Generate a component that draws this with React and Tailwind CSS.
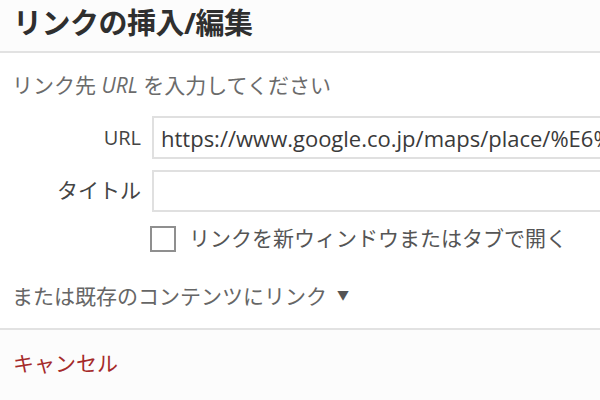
export default function App() {
  const jp = 'font-["Open_Sans","Noto_Sans_CJK_JP",sans-serif]';
  return (
    <div className={`w-[600px] h-[400px] overflow-hidden bg-white ${jp}`}>
      <div className="flex h-[53px] items-center border-b-2 border-[#e2e2e2] bg-[#fcfcfc] pb-[6px] pl-[13px]">
        <h1 className="text-[29px] font-bold leading-none tracking-[-0.5px] text-[#2f2f2f]">リンクの挿入/編集</h1>
      </div>

      <div className="px-[12px] pt-[20px]">
        <p className="text-[21px] leading-6 text-[#6b6b6b]">
          リンク先 <em>URL</em> を入力してください
        </p>

        <div className="mt-[19px] flex flex-col gap-[11px]">
          <div className="flex items-center gap-[11px]">
            <label className="w-[129px] shrink-0 text-right text-[20px] text-[#444]">URL</label>
            <input
              readOnly
              value="https://www.google.co.jp/maps/place/%E6%9D%B1%E4%BA%AC"
              className="h-[43px] w-[470px] shrink-0 border-2 border-[#e0e0e0] px-[7px] text-[22px] text-[#3a3a3a] outline-none"
            />
          </div>
          <div className="flex items-center gap-[11px]">
            <label className="w-[129px] shrink-0 text-right text-[21px] text-[#444]">タイトル</label>
            <input
              readOnly
              value=""
              className="h-[42px] w-[470px] shrink-0 border-2 border-[#e0e0e0] px-[7px] text-[21px] outline-none"
            />
          </div>
          <label className="ml-[138px] flex items-center gap-[13px]">
            <span className="h-[26px] w-[26px] shrink-0 border-2 border-[#8f8f8f] bg-white" />
            <span className="text-[21px] text-[#555]">リンクを新ウィンドウまたはタブで開く</span>
          </label>
        </div>

        <div className="mt-[29px] flex items-center gap-[10px] pb-[20px]">
          <span className="text-[21px] leading-6 text-[#666]">または既存のコンテンツにリンク</span>
          <span className="text-[12px] text-[#555]">▼</span>
        </div>
      </div>

      <div className="h-[72px] border-t-2 border-[#e2e2e2] bg-[#fcfcfc] px-[13px] pt-[21px]">
        <span className="text-[21px] leading-6 text-[#a52a2a]">キャンセル</span>
      </div>
    </div>
  );
}
